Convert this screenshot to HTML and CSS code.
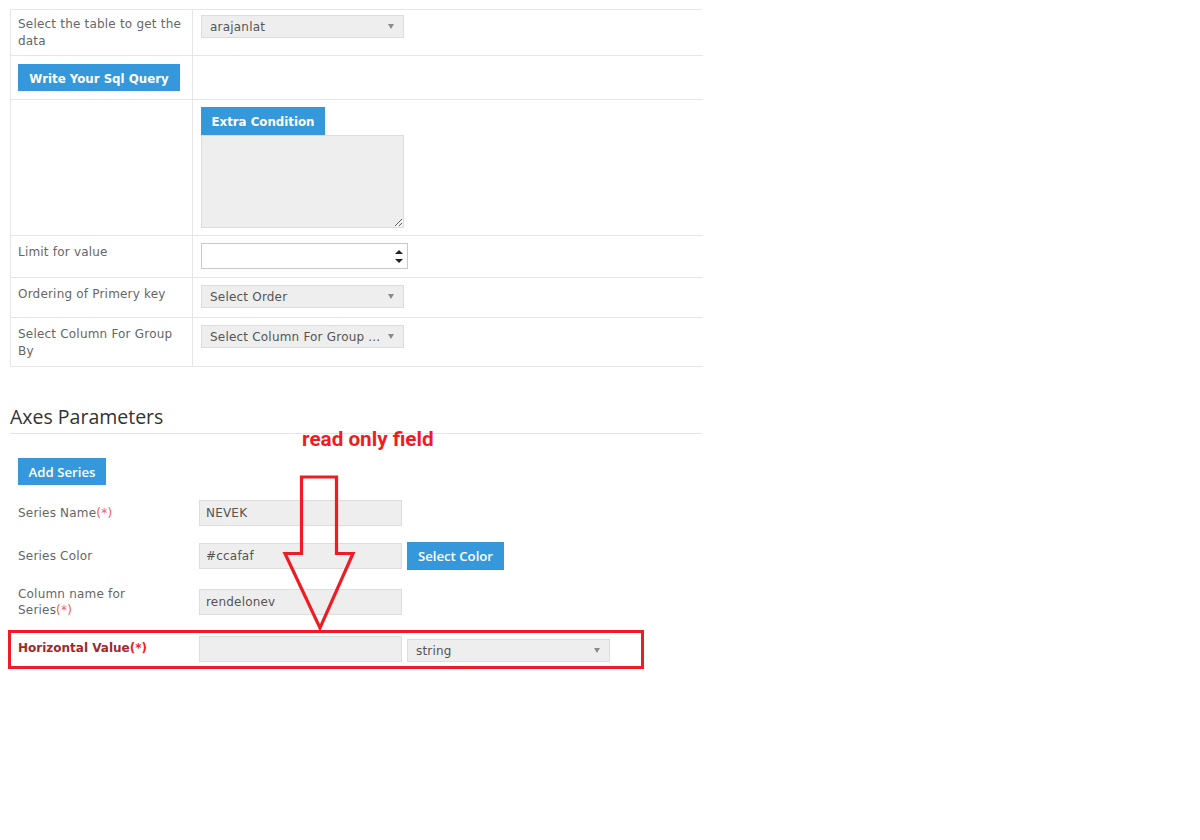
FILE: index.html
```html
<!DOCTYPE html>
<html>
<head>
<meta charset="utf-8">
<link rel="stylesheet" href="styles.css">
</head>
<body>
<div class="page">
  <div class="tbl">
    <div class="c l r1">Select the table to get the data</div>
    <div class="c v r1"><div class="sel"><span>arajanlat</span><i class="caret"></i></div></div>

    <div class="c l r2"><button class="btn btn-lg">Write Your Sql Query</button></div>
    <div class="c v r2"></div>

    <div class="c l"></div>
    <div class="c v">
      <button class="btn btn-tab">Extra Condition</button>
      <textarea class="area"></textarea>
    </div>

    <div class="c l">Limit for value</div>
    <div class="c v"><div class="num"><span class="spin"><i class="up"></i><i class="down"></i></span></div></div>

    <div class="c l">Ordering of Primery key</div>
    <div class="c v"><div class="sel"><span>Select Order</span><i class="caret"></i></div></div>

    <div class="c l">Select Column For Group By</div>
    <div class="c v"><div class="sel"><span>Select Column For Group ...</span><i class="caret"></i></div></div>
  </div>

  <h3 class="section">Axes Parameters</h3>

  <div class="series">
    <button class="btn btn-sm btn-add">Add Series</button>

    <div class="frow first">
      <label class="flabel">Series Name<span class="req">(*)</span></label>
      <div class="inp">NEVEK</div>
    </div>

    <div class="frow">
      <label class="flabel">Series Color</label>
      <div class="inp">#ccafaf</div>
      <button class="btn btn-sm btn-color">Select Color</button>
    </div>

    <div class="frow">
      <label class="flabel">Column name for<br>Series<span class="req">(*)</span></label>
      <div class="inp">rendelonev</div>
    </div>

    <div class="frow last">
      <label class="flabel err">Horizontal Value<span class="req-strong">(*)</span></label>
      <div class="inp"></div>
      <div class="sel sel-h"><span>string</span><i class="caret"></i></div>
    </div>
  </div>
</div>

<div class="note">read only field</div>
<svg class="arrow" width="1200" height="840" viewBox="0 0 1200 840">
  <polygon points="301.5,477 336.5,477 336.5,553.5 353,553.5 320,628 285,553.5 301.5,553.5" fill="none" stroke="#ee1c24" stroke-width="3.2" stroke-linejoin="miter"/>
</svg>
<div class="mark"></div>
</body>
</html>
```

FILE: styles.css
```css
* { box-sizing: border-box; }

html, body {
  margin: 0;
  padding: 0;
  background: #ffffff;
}

body {
  position: relative;
  width: 1200px;
  height: 840px;
  overflow: hidden;
  font-family: "DejaVu Sans", Verdana, sans-serif;
  font-size: 12px;
  color: #666666;
}

.page {
  padding-top: 9px;
  margin-left: 10px;
  width: 692px;
}

/* ---------- data table ---------- */
.tbl {
  display: grid;
  grid-template-columns: 182px 510px;
  grid-template-rows: 46px 44px 136px 42px 40px 49px;
  border-top: 1px solid #e6e6e6;
  border-left: 1px solid #e6e6e6;
}

.c {
  border-bottom: 1px solid #e6e6e6;
  padding-top: 7px;
  line-height: 17px;
  letter-spacing: 0.2px;
}

.c.l {
  border-right: 1px solid #e6e6e6;
  padding-left: 7px;
  padding-right: 8px;
  padding-top: 8px;
}

.c.v {
  padding-left: 8px;
}

.c.r1 { padding-top: 5px; }
.c.l.r1 { padding-top: 6px; }
.c.r2, .c.l.r2 { padding-top: 8px; }

/* ---------- fields ---------- */
.sel {
  width: 203px;
  height: 23px;
  background: #eeeeee;
  border: 1px solid #dddddd;
  display: flex;
  align-items: center;
  justify-content: space-between;
  padding: 2px 9px 0 8px;
  color: #555555;
  font-size: 12px;
  letter-spacing: 0.2px;
  line-height: 19px;
  white-space: nowrap;
}

.caret {
  display: block;
  width: 0;
  height: 0;
  margin-top: -2px;
  border-left: 3px solid transparent;
  border-right: 3px solid transparent;
  border-top: 5px solid #8a8a8a;
}

.num {
  width: 207px;
  height: 26px;
  background: #ffffff;
  border: 1px solid #c9c9c9;
  display: flex;
  justify-content: flex-end;
  align-items: center;
  padding-right: 4px;
}

.spin {
  display: flex;
  flex-direction: column;
  gap: 5px;
}

.spin .up {
  display: block;
  width: 0;
  height: 0;
  border-left: 4px solid transparent;
  border-right: 4px solid transparent;
  border-bottom: 4.5px solid #222222;
}

.spin .down {
  display: block;
  width: 0;
  height: 0;
  border-left: 4px solid transparent;
  border-right: 4px solid transparent;
  border-top: 4.5px solid #222222;
}

.area {
  display: block;
  width: 203px;
  height: 93px;
  margin: 0;
  background: #eeeeee;
  border: 1px solid #dddddd;
  resize: both;
  font-family: "DejaVu Sans", sans-serif;
}

/* ---------- buttons ---------- */
.btn {
  display: inline-flex;
  align-items: center;
  justify-content: center;
  border: none;
  margin: 0;
  background: #3498db;
  color: #ffffff;
  font-family: "DejaVu Sans", Verdana, sans-serif;
  font-weight: bold;
  cursor: pointer;
  white-space: nowrap;
}

.btn-lg {
  width: 162px;
  height: 27px;
  font-size: 11.8px;
  padding: 2px 0 0 0;
}

.btn-tab {
  display: flex;
  width: 124px;
  height: 28px;
  font-size: 11.8px;
  padding: 2px 0 0 0;
}

.btn-sm {
  height: 27px;
  padding: 0;
  font-family: "Open Sans", sans-serif;
  font-weight: 600;
  font-size: 13.2px;
}

.btn-add {
  width: 88px;
}

.btn-color {
  width: 97px;
  height: 28px;
  margin-left: 5px;
}

/* ---------- section ---------- */
.section {
  margin: 37px 0 0 0;
  padding: 0 0 3px 0;
  font-family: "Open Sans", sans-serif;
  font-weight: normal;
  font-size: 19.5px;
  line-height: 26px;
  color: #333333;
  border-bottom: 1px solid #e5e5e5;
}

.series {
  padding-left: 8px;
  padding-top: 24px;
}

.frow {
  display: flex;
  align-items: center;
  margin-top: 16px;
}

.frow.first {
  margin-top: 15px;
}

.frow.last {
  margin-top: 18px;
}

.flabel {
  width: 181px;
  line-height: 16px;
  letter-spacing: 0.2px;
  color: #666666;
  padding-right: 20px;
}

.req {
  color: #f25a5a;
}

.flabel.err {
  color: #a3282b;
  font-weight: bold;
  letter-spacing: 0;
  padding-top: 0;
  margin-top: -3px;
}

.req-strong {
  color: #ee2222;
}

.inp {
  width: 203px;
  height: 26px;
  background: #eeeeee;
  border: 1px solid #dddddd;
  padding: 1px 0 0 6px;
  line-height: 23px;
  color: #555555;
  letter-spacing: 0.2px;
}

.sel-h {
  margin-left: 5px;
  margin-top: 3px;
}

/* ---------- annotations ---------- */
.note {
  position: absolute;
  left: 302px;
  top: 427px;
  font-family: Roboto, "Open Sans", sans-serif;
  font-weight: bold;
  font-size: 20.7px;
  line-height: 24px;
  color: #ee1c24;
  white-space: nowrap;
}

.arrow {
  position: absolute;
  left: 0;
  top: 0;
  pointer-events: none;
}

.mark {
  position: absolute;
  left: 8px;
  top: 630px;
  width: 636px;
  height: 39px;
  border: 3px solid #ee1c24;
  pointer-events: none;
}
```
